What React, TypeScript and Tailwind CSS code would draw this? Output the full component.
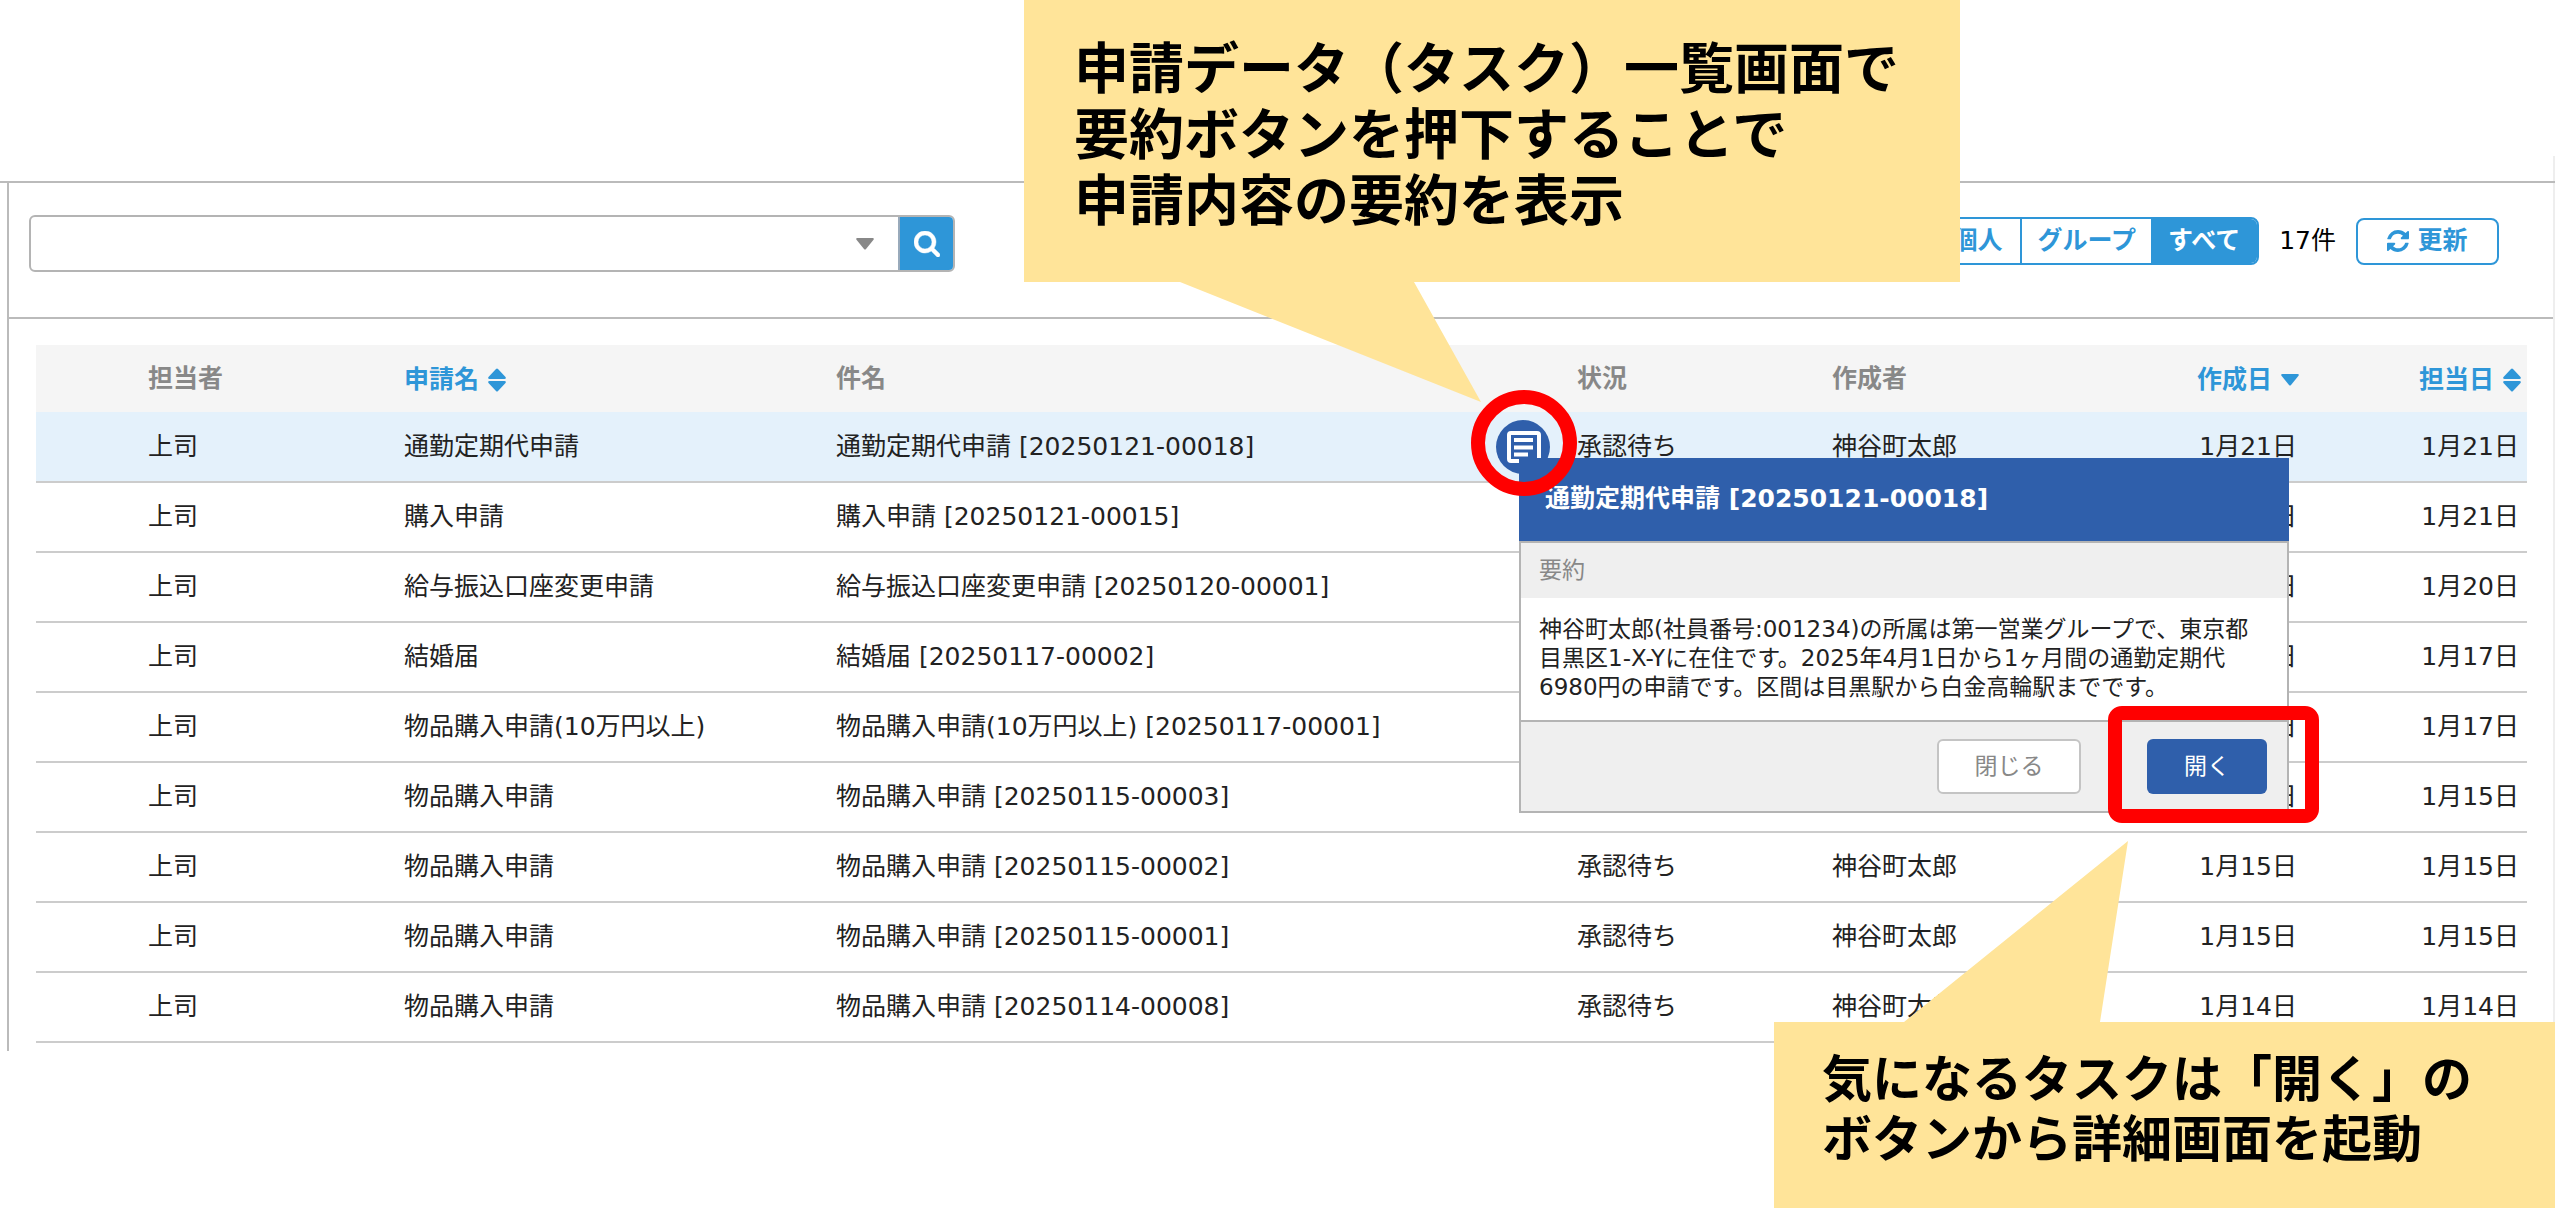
import type { ReactNode } from "react";

type Task = {
  assignee: string;
  form: string;
  code: string;
  date: string;
};

const tasks: Task[] = [
  { assignee: "上司", form: "通勤定期代申請", code: "20250121-00018", date: "1月21日" },
  { assignee: "上司", form: "購入申請", code: "20250121-00015", date: "1月21日" },
  { assignee: "上司", form: "給与振込口座変更申請", code: "20250120-00001", date: "1月20日" },
  { assignee: "上司", form: "結婚届", code: "20250117-00002", date: "1月17日" },
  { assignee: "上司", form: "物品購入申請(10万円以上)", code: "20250117-00001", date: "1月17日" },
  { assignee: "上司", form: "物品購入申請", code: "20250115-00003", date: "1月15日" },
  { assignee: "上司", form: "物品購入申請", code: "20250115-00002", date: "1月15日" },
  { assignee: "上司", form: "物品購入申請", code: "20250115-00001", date: "1月15日" },
  { assignee: "上司", form: "物品購入申請", code: "20250114-00008", date: "1月14日" },
];

function SearchIcon() {
  return (
    <svg viewBox="0 128 1664 1664" className="size-[26px]" fill="currentColor" aria-hidden="true">
      <path
        d="M1152 832q0-185-131.500-316.500t-316.500-131.500-316.500 131.500-131.500 316.500 131.500 316.500 316.500 131.500 316.500-131.500 131.500-316.500zm512 832q0 52-38 90t-90 38q-54 0-90-38l-343-342q-179 124-399 124-143 0-273.500-55.500t-225-150-150-225-55.500-273.500 55.500-273.500 150-225 225-150 273.500-55.500 273.500 55.500 225 150 150 225 55.500 273.500q0 220-124 399l343 343q37 37 37 90z"
        stroke="currentColor"
        strokeWidth="30"
      />
    </svg>
  );
}

function RefreshIcon() {
  return (
    <svg viewBox="0 128 1536 1536" className="size-[22px]" fill="currentColor" aria-hidden="true">
      <path d="M1511 1056q0 5-1 7-64 268-268 434.500t-478 166.500q-146 0-282.500-55t-243.500-157l-129 129q-19 19-45 19t-45-19-19-45v-448q0-26 19-45t45-19h448q26 0 45 19t19 45-19 45l-137 137q71 66 161 102t187 36q134 0 250-65t186-179q11-17 53-117 8-23 30-23h192q13 0 22.500 9.500t9.500 22.500zm25-800v448q0 26-19 45t-45 19h-448q-26 0-45-19t-19-45 19-45l138-138q-148-137-349-137-134 0-250 65t-186 179q-11 17-53 117-8 23-30 23h-199q-13 0-22.500-9.500t-9.500-22.500v-7q65-268 270-434.500t480-166.500q146 0 284 55.500t245 156.500l130-129q19-19 45-19t45 19 19 45z" />
    </svg>
  );
}

function SortIcon() {
  return (
    <svg viewBox="0 0 18 24" className="h-6 w-[18px] shrink-0" fill="currentColor" aria-hidden="true">
      <path d="M8 1Q9 0 10 1L17.500 9Q18.500 11 16.500 11H1.500Q-.5 11 .5 9Z" />
      <path d="M8 23Q9 24 10 23L17.500 15Q18.500 13 16.500 13H1.500Q-.5 13 .5 15Z" />
    </svg>
  );
}

function CaretIcon() {
  return (
    <svg viewBox="0 0 18 12" className="h-3 w-[18px] shrink-0" fill="currentColor" aria-hidden="true">
      <path d="M1.500 0H16.500Q18.500 0 17.500 1.800L10 11Q9 12 8 11L.5 1.800Q-.5 0 1.500 0Z" />
    </svg>
  );
}

function SummaryIcon() {
  return (
    <svg viewBox="0 0 54 54" className="size-[54px]" aria-hidden="true">
      <circle cx="27" cy="27" r="27" fill="#2f5fab" />
      <path
        d="M24 41H15Q13 41 13 39V15Q13 13 15 13H41Q43 13 43 15V38"
        fill="none"
        stroke="#fff"
        strokeWidth="4"
      />
      <path d="M18 20H37M18 27.500H37M18 34.500H32" stroke="#fff" strokeWidth="4" />
    </svg>
  );
}

function SortButton({ children, icon }: { children: ReactNode; icon: ReactNode }) {
  return (
    <button type="button" className="inline-flex items-center gap-[9px] pt-0.5 font-bold text-[#2e96d8]">
      {children}
      {icon}
    </button>
  );
}

function Toolbar() {
  return (
    <div className="flex h-[136px] items-start justify-between border-b-2 border-[#bbb] pt-8 pr-[54px] pl-5">
      <form className="flex h-[57px] w-[926px] overflow-hidden rounded-md border-2 border-[#b4b4b4]">
        <input type="text" aria-label="検索" className="min-w-0 flex-1 px-3 outline-none" />
        <button type="button" aria-label="検索条件" className="px-6 text-[#888]">
          <CaretIcon />
        </button>
        <button
          type="submit"
          aria-label="検索を実行"
          className="flex w-[55px] items-center justify-center border-l-2 border-[#9ab] bg-[#2e96d8] text-white"
        >
          <SearchIcon />
        </button>
      </form>
      <div className="flex items-center gap-5 pt-0.5">
        <div className="flex h-12 overflow-hidden rounded-lg border-2 border-[#2e96d8] font-bold text-[#2e96d8]">
          <button type="button" className="border-r-2 border-[#2e96d8] px-[18px]">
            個人
          </button>
          <button type="button" className="px-[15px]">
            グループ
          </button>
          <button type="button" className="bg-[#2e96d8] px-[17px] text-white">
            すべて
          </button>
        </div>
        <span className="text-black">17件</span>
        <button
          type="button"
          className="flex h-[47px] w-[143px] items-center justify-center gap-2 rounded-lg border-2 border-[#2e96d8] font-bold text-[#2e96d8]"
        >
          <RefreshIcon />
          更新
        </button>
      </div>
    </div>
  );
}

function SummaryPopup() {
  return (
    <div
      role="dialog"
      aria-labelledby="summary-title"
      className="absolute top-[46px] -left-[58px] z-10 w-[770px] border-2 border-t-0 border-[#b4b4b4] bg-[#efefef] text-[23px] leading-[29px]"
    >
      <h2
        id="summary-title"
        className="-mx-0.5 h-[83px] bg-[#2f5fab] px-[26px] pt-6 text-[25px] leading-[34px] font-bold text-white"
      >
        通勤定期代申請 [20250121-00018]
      </h2>
      <h3 className="border-t-2 border-[#b4b4b4] px-[18px] py-[13px] text-[#888]">要約</h3>
      <p className="border-b-2 border-[#b4b4b4] bg-white px-[18px] pt-[17px] pb-[18px]">
        神谷町太郎(社員番号:001234)の所属は第一営業グループで、東京都
        <br />
        目黒区1-X-Yに在住です。2025年4月1日から1ヶ月間の通勤定期代
        <br />
        6980円の申請です。区間は目黒駅から白金高輪駅までです。
      </p>
      <div className="flex justify-end gap-[66px] py-[17px] pr-5">
        <button
          type="button"
          className="h-[55px] w-36 rounded-md border-2 border-[#c4c4c4] bg-white text-[#888]"
        >
          閉じる
        </button>
        <button type="button" className="relative h-[55px] w-[120px] rounded-md bg-[#2f5fab] text-white">
          開く
          <span className="absolute -top-[33px] -left-[39px] h-[117px] w-[211px] rounded-[14px] border-14 border-[#f00]" />
        </button>
      </div>
    </div>
  );
}

function TaskTable() {
  return (
    <table className="w-full table-fixed">
      <colgroup>
        <col className="w-[368px]" />
        <col className="w-[432px]" />
        <col />
        <col className="w-[255px]" />
        <col className="w-[240px]" />
        <col className="w-[227px]" />
        <col className="w-[228px]" />
      </colgroup>
      <thead>
        <tr className="h-[67px] bg-[#f5f5f5] text-left text-[#888]">
          <th className="pl-28">担当者</th>
          <th>
            <SortButton icon={<SortIcon />}>申請名</SortButton>
          </th>
          <th>件名</th>
          <th>状況</th>
          <th>作成者</th>
          <th className="text-right">
            <SortButton icon={<CaretIcon />}>作成日</SortButton>
          </th>
          <th className="pr-1.5 text-right">
            <SortButton icon={<SortIcon />}>担当日</SortButton>
          </th>
        </tr>
      </thead>
      <tbody>
        {tasks.map((task, i) => (
          <tr key={task.code} className="h-[70px] border-b-2 border-[#ccc] first:bg-[#e4f1fb]">
            <td className="pl-28">{task.assignee}</td>
            <td>{task.form}</td>
            <td>
              {task.form} [{task.code}]
            </td>
            <td className={i === 0 ? "relative" : ""}>
              {i === 0 && (
                <>
                  <button type="button" aria-label="要約" className="absolute top-2 -left-[81px]">
                    <SummaryIcon />
                  </button>
                  <SummaryPopup />
                  <span className="absolute -top-[22px] -left-[106px] z-20 size-[106px] rounded-full border-14 border-[#f00]" />
                </>
              )}
              承認待ち
            </td>
            <td>神谷町太郎</td>
            <td className="pr-0.5 text-right">{task.date}</td>
            <td className="pr-2 text-right">{task.date}</td>
          </tr>
        ))}
      </tbody>
    </table>
  );
}

export default function App() {
  return (
    <div className="relative min-h-screen overflow-hidden bg-white font-['DejaVu_Sans','Noto_Sans_CJK_JP',sans-serif] text-[25px] leading-[34px] text-[#222]">
      <main className="pt-[156px]">
        <div className="h-[25px] border-r-2 border-[#eee]" />
        <div className="border-t-2 border-[#bbb] pl-[7px]">
          <section className="border-r-2 border-l-2 border-r-[#eee] border-l-[#bbb] pb-2">
            <Toolbar />
            <div className="pt-[26px] pr-[26px] pl-[27px]">
              <TaskTable />
            </div>
          </section>
        </div>
      </main>

      <aside className="absolute top-0 right-[595px] z-30 h-[282px] w-[936px] bg-[#ffe499] pt-9 pl-[50px] text-[55px] leading-[66px] font-bold text-black">
        <p>
          申請データ（タスク）一覧画面で
          <br />
          要約ボタンを押下することで
          <br />
          申請内容の要約を表示
        </p>
        <svg
          viewBox="0 0 301 121"
          className="absolute top-[281px] left-[156px] h-[121px] w-[301px]"
          fill="#ffe499"
          aria-hidden="true"
        >
          <path d="M0 0H234V1L301 121L0 1Z" />
        </svg>
      </aside>

      <aside className="absolute top-[1022px] right-0 z-30 h-[186px] w-[781px] bg-[#ffe499] pt-7 pl-12 text-[50px] leading-[60px] font-bold text-black">
        <p>
          気になるタスクは「開く」の
          <br />
          ボタンから詳細画面を起動
        </p>
        <svg
          viewBox="0 0 224 182"
          className="absolute -top-[181px] left-[130px] h-[182px] w-[224px]"
          fill="#ffe499"
          aria-hidden="true"
        >
          <path d="M0 182V181L224 0L196 181V182Z" />
        </svg>
      </aside>
    </div>
  );
}
